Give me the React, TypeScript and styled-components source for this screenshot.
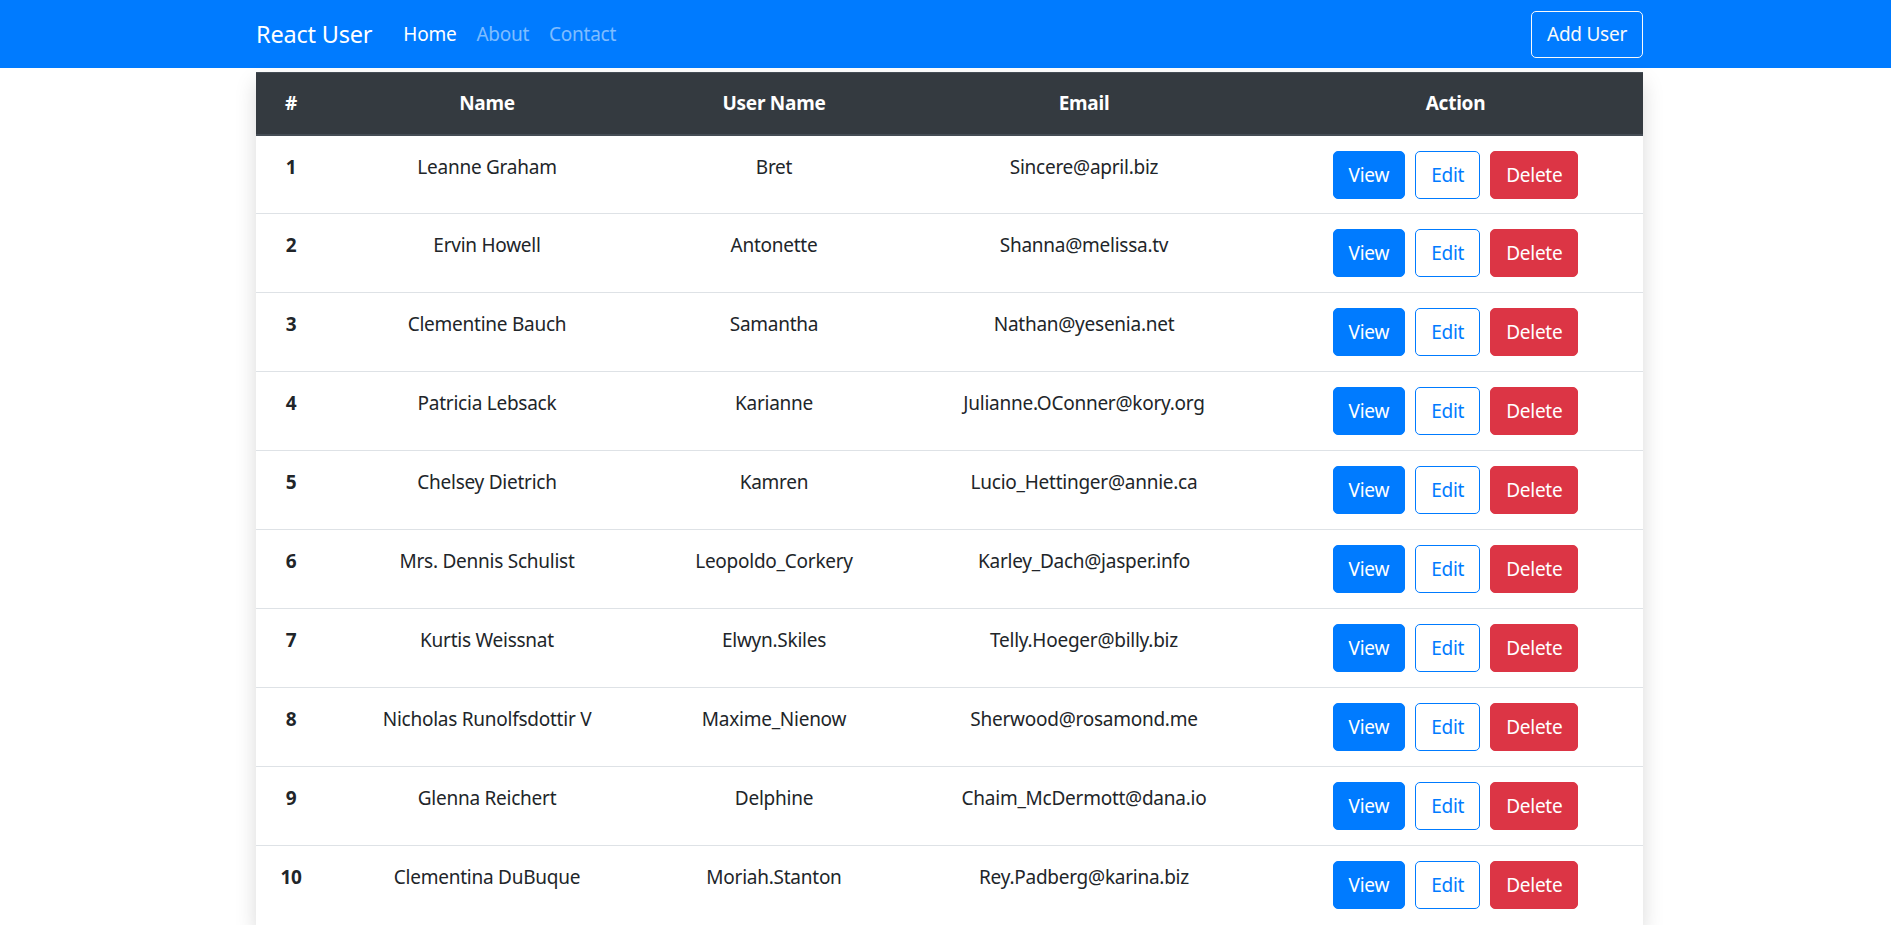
import React from "react";
import styled, { createGlobalStyle } from "styled-components";

const GlobalStyle = createGlobalStyle`
  html, body {
    margin: 0;
    padding: 0;
    background: #fff;
    font-family: "Noto Sans", "Open Sans", sans-serif;
    color: #212529;
  }
  * {
    box-sizing: border-box;
  }
`;

const users = [
  { id: 1, name: "Leanne Graham", username: "Bret", email: "Sincere@april.biz" },
  { id: 2, name: "Ervin Howell", username: "Antonette", email: "Shanna@melissa.tv" },
  { id: 3, name: "Clementine Bauch", username: "Samantha", email: "Nathan@yesenia.net" },
  { id: 4, name: "Patricia Lebsack", username: "Karianne", email: "Julianne.OConner@kory.org" },
  { id: 5, name: "Chelsey Dietrich", username: "Kamren", email: "Lucio_Hettinger@annie.ca" },
  { id: 6, name: "Mrs. Dennis Schulist", username: "Leopoldo_Corkery", email: "Karley_Dach@jasper.info" },
  { id: 7, name: "Kurtis Weissnat", username: "Elwyn.Skiles", email: "Telly.Hoeger@billy.biz" },
  { id: 8, name: "Nicholas Runolfsdottir V", username: "Maxime_Nienow", email: "Sherwood@rosamond.me" },
  { id: 9, name: "Glenna Reichert", username: "Delphine", email: "Chaim_McDermott@dana.io" },
  { id: 10, name: "Clementina DuBuque", username: "Moriah.Stanton", email: "Rey.Padberg@karina.biz" },
];

const Navbar = styled.nav`
  background: #007bff;
  height: 68px;
`;

const NavInner = styled.div`
  width: 1387px;
  margin-left: 256px;
  height: 100%;
  display: flex;
  align-items: center;
`;

const Brand = styled.a`
  color: #fff;
  font-size: 23.5px;
  letter-spacing: -0.2px;
  line-height: 37px;
  margin-right: 21px;
  text-decoration: none;
`;

const NavLinks = styled.div`
  display: flex;
  flex: 1;
`;

const NavLink = styled.a<{ $active?: boolean }>`
  color: ${(p) => (p.$active ? "#fff" : "rgba(255, 255, 255, 0.5)")};
  font-size: 19px;
  letter-spacing: -0.25px;
  line-height: 30px;
  padding: 0 10px;
  text-decoration: none;
`;

const OutlineButton = styled.button`
  background: transparent;
  border: 1px solid #f8f9fa;
  border-radius: 5px;
  color: #f8f9fa;
  font-family: inherit;
  font-size: 19px;
  letter-spacing: -0.25px;
  line-height: 30px;
  height: 47px;
  padding: 0 15px;
`;

const Container = styled.div`
  width: 1387px;
  margin: 4px 0 0 256px;
  box-shadow: 0 10px 20px rgba(0, 0, 0, 0.15);
`;

const Table = styled.table`
  width: 100%;
  border-collapse: collapse;
  background: #fff;
  text-align: center;
  font-size: 19px;
  letter-spacing: -0.25px;
  line-height: 30px;
`;

const HeadCell = styled.th<{ $w: number }>`
  width: ${(p) => p.$w}px;
  background: #343a40;
  color: #fff;
  font-weight: 700;
  height: 62px;
  padding: 0;
  border-top: 1px solid #454d55;
  border-bottom: 2px solid #454d55;
  vertical-align: middle;
`;

const Row = styled.tr`
  border-bottom: 1px solid #dee2e6;
  &:last-child {
    border-bottom: none;
  }
`;

const Cell = styled.td<{ $bold?: boolean }>`
  height: 79px;
  padding: 16px 15px 0;
  vertical-align: top;
  font-weight: ${(p) => (p.$bold ? 700 : 400)};
`;

const Actions = styled.div`
  display: flex;
  justify-content: center;
  gap: 10px;
  margin-top: -1px;
`;

const Btn = styled.button<{ $kind: "primary" | "outline" | "danger" }>`
  font-family: inherit;
  font-size: 19px;
  letter-spacing: -0.25px;
  line-height: 30px;
  height: 48px;
  padding: 0 15px;
  border-radius: 5px;
  border: 1px solid
    ${(p) => (p.$kind === "danger" ? "#dc3545" : "#007bff")};
  background: ${(p) =>
    p.$kind === "primary" ? "#007bff" : p.$kind === "danger" ? "#dc3545" : "#fff"};
  color: ${(p) => (p.$kind === "outline" ? "#007bff" : "#fff")};
`;

const columns = [
  { label: "#", w: 70 },
  { label: "Name", w: 322 },
  { label: "User Name", w: 252 },
  { label: "Email", w: 368 },
  { label: "Action", w: 375 },
];

export default function App() {
  return (
    <>
      <GlobalStyle />
      <Navbar>
        <NavInner>
          <Brand href="#">React User</Brand>
          <NavLinks>
            <NavLink $active href="#">Home</NavLink>
            <NavLink href="#">About</NavLink>
            <NavLink href="#">Contact</NavLink>
          </NavLinks>
          <OutlineButton>Add User</OutlineButton>
        </NavInner>
      </Navbar>
      <Container>
        <Table>
          <thead>
            <tr>
              {columns.map((c) => (
                <HeadCell key={c.label} $w={c.w}>
                  {c.label}
                </HeadCell>
              ))}
            </tr>
          </thead>
          <tbody>
            {users.map((u) => (
              <Row key={u.id}>
                <Cell $bold>{u.id}</Cell>
                <Cell>{u.name}</Cell>
                <Cell>{u.username}</Cell>
                <Cell>{u.email}</Cell>
                <Cell>
                  <Actions>
                    <Btn $kind="primary">View</Btn>
                    <Btn $kind="outline">Edit</Btn>
                    <Btn $kind="danger">Delete</Btn>
                  </Actions>
                </Cell>
              </Row>
            ))}
          </tbody>
        </Table>
      </Container>
    </>
  );
}
